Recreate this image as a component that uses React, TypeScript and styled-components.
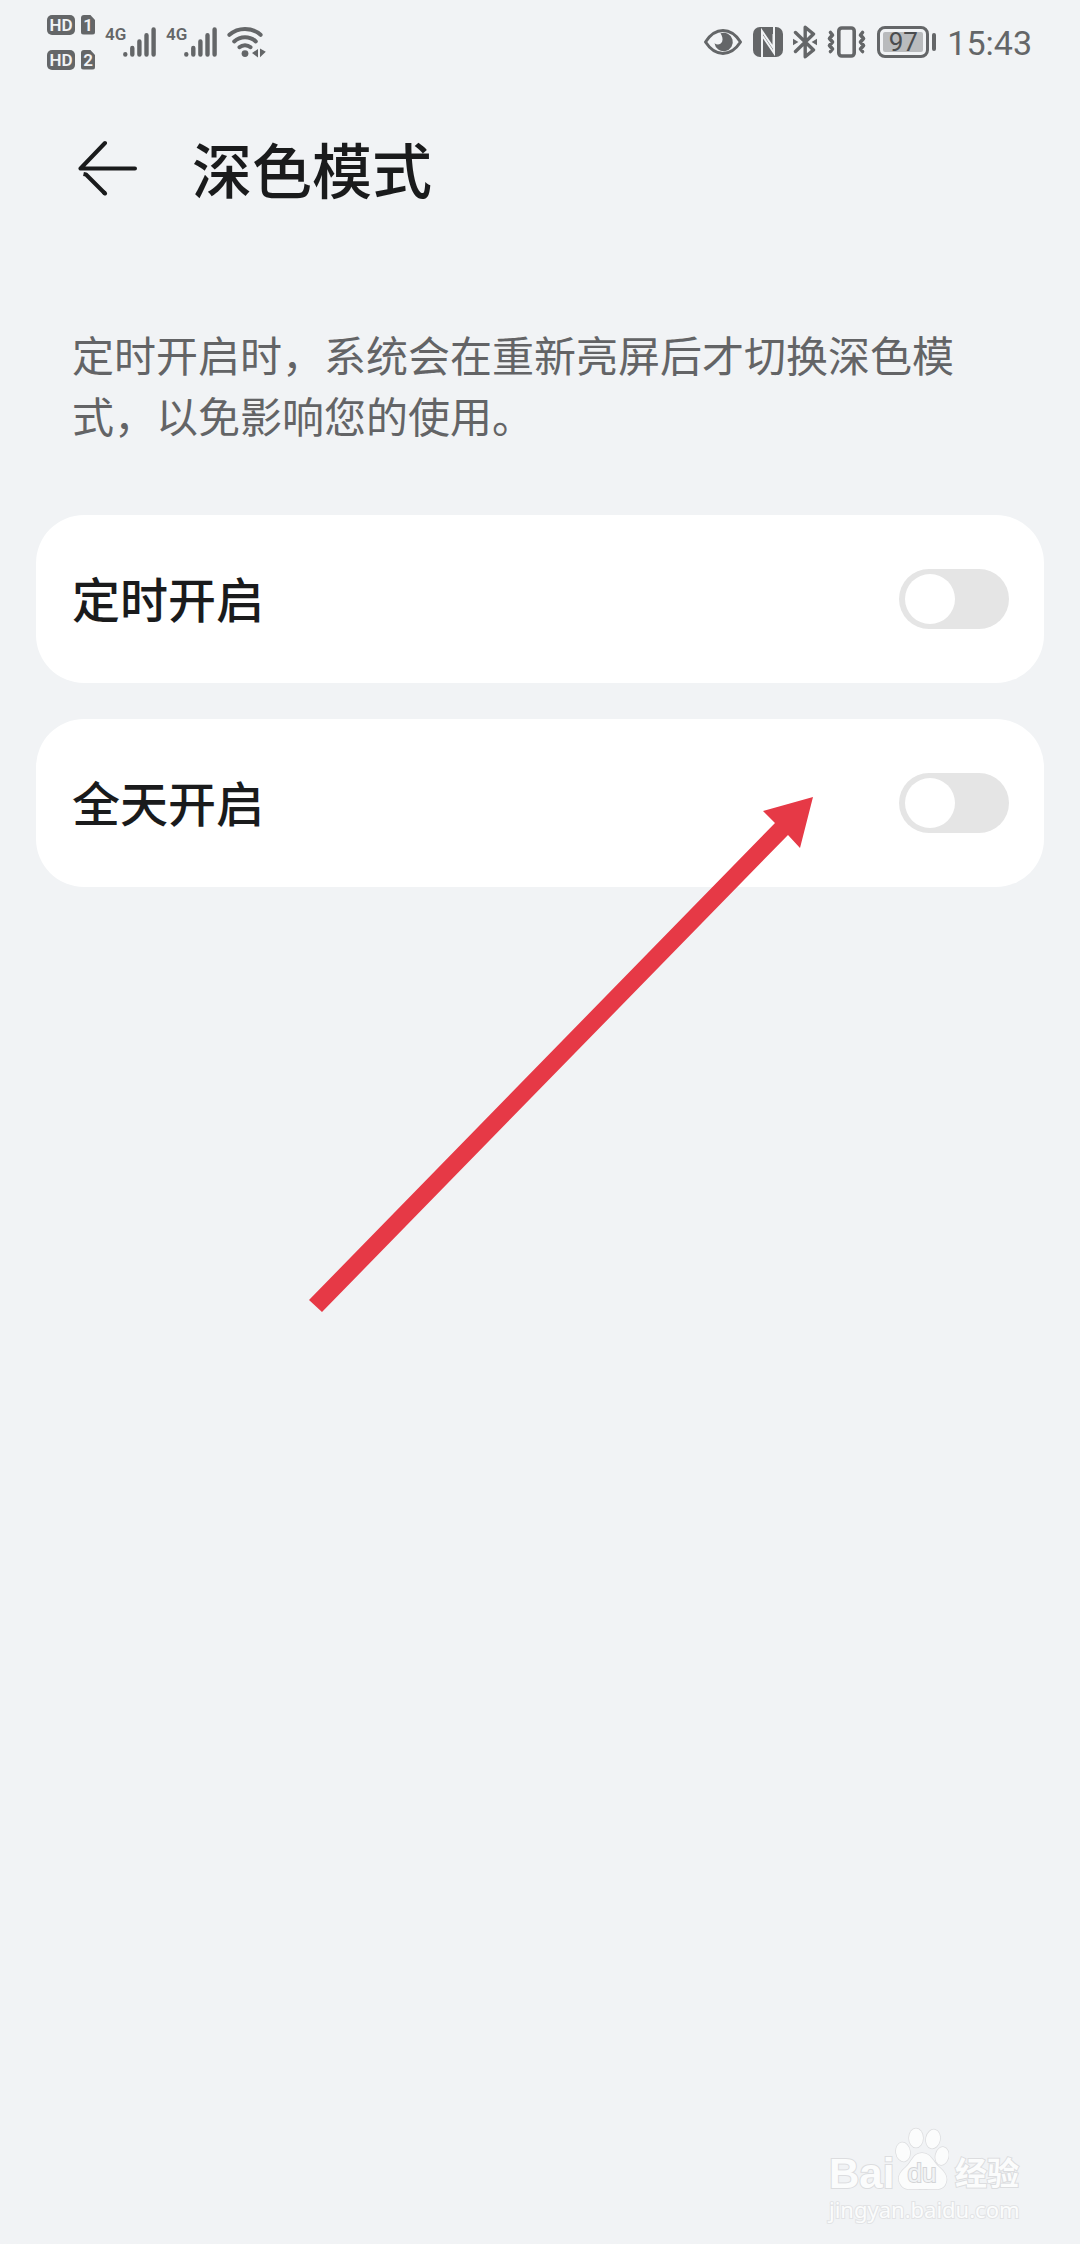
import React, { useState } from "react";
import styled, { createGlobalStyle } from "styled-components";

const INK = "#1a1b1c";
const STATUS = "#646668";
const PAGE = "#f1f3f5";

const GlobalStyle = createGlobalStyle`
  * { box-sizing: border-box; }
  body {
    margin: 0;
    background: ${PAGE};
    color: ${INK};
    font-family: "Noto Sans CJK SC", "Noto Sans", sans-serif;
  }
`;

const Page = styled.div`
  position: relative;
  min-height: 100vh;
  overflow: hidden;
  background: ${PAGE};
`;

const StatusBar = styled.div`
  display: flex;
  justify-content: space-between;
  align-items: center;
  height: 84px;
  padding: 0 48px 0 47px;
  color: ${STATUS};
  font-family: Roboto, sans-serif;
`;

const StatusGroup = styled.div`
  display: flex;
  align-items: center;
  gap: 10px;
  svg { display: block; }
`;

const SimColumn = styled.div`
  display: flex;
  flex-direction: column;
  gap: 15px;
`;

const SimRow = styled.div`
  display: flex;
  gap: 6px;
  color: ${PAGE};
  font-size: 17px;
  line-height: 20px;
  font-weight: 600;
  text-align: center;
`;

const HdBadge = styled.span`
  width: 28px;
  height: 20px;
  border-radius: 5px;
  background: ${STATUS};
`;

const SimBadge = styled.span`
  width: 14px;
  height: 20px;
  border-radius: 3px;
  background: ${STATUS};
  clip-path: polygon(0 0, 64% 0, 100% 28%, 100% 100%, 0 100%);
`;

const Cell = styled.div`
  display: flex;
  align-items: flex-start;
  width: 51px;
  height: 30px;
`;

const NetType = styled.span`
  width: 18px;
  font-size: 17px;
  line-height: 14px;
  font-weight: 600;
`;

const Battery = styled.div`
  display: flex;
  align-items: center;
  gap: 3px;
  width: 60px;
`;

const BatteryShell = styled.div`
  width: 52px;
  height: 32px;
  padding: 3px;
  border: 3px solid ${STATUS};
  border-radius: 8px;
`;

const BatteryFill = styled.div`
  height: 20px;
  border-radius: 2px;
  background: #b9bbbd;
  color: #4a4c4e;
  font-size: 26px;
  line-height: 20px;
  text-align: center;
`;

const BatteryNub = styled.div`
  width: 4px;
  height: 18px;
  border-radius: 2px;
  background: ${STATUS};
`;

const Clock = styled.time`
  padding-top: 2px;
  font-size: 34px;
  line-height: 40px;
`;

const Header = styled.header`
  display: flex;
  align-items: center;
  gap: 54px;
  height: 168px;
  padding: 0 78px;
`;

const BackButton = styled.button`
  display: block;
  width: 60px;
  height: 56px;
  padding: 0;
  border: 0;
  background: none;
  color: ${INK};
  cursor: pointer;
  svg { display: block; }
`;

const Title = styled.h1`
  margin: 0;
  font-size: 60px;
  line-height: 72px;
  font-weight: 500;
`;

const Main = styled.main`
  padding: 71px 36px;
`;

const Description = styled.p`
  margin: 0 0 70px;
  padding: 0 36px;
  color: #636466;
  font-size: 42px;
  line-height: 61px;
`;

const CardList = styled.div`
  display: flex;
  flex-direction: column;
  gap: 36px;
`;

const Card = styled.label`
  display: flex;
  align-items: center;
  justify-content: space-between;
  height: 168px;
  padding: 0 35px 0 36px;
  border-radius: 48px;
  background: #fff;
  cursor: pointer;
`;

const CardLabel = styled.span`
  padding-bottom: 4px;
  font-size: 48px;
  line-height: 64px;
  font-weight: 500;
`;

const Toggle = styled.input`
  appearance: none;
  display: flex;
  align-items: center;
  width: 110px;
  height: 60px;
  margin: 0;
  padding: 0 6px;
  border-radius: 30px;
  background: #e5e5e5;
  cursor: pointer;

  &::before {
    content: "";
    width: 50px;
    height: 50px;
    border-radius: 50%;
    background: #fff;
  }

  &:checked {
    justify-content: flex-end;
    background: #0a59f7;
  }
`;

const Pointer = styled.svg`
  position: absolute;
  left: 309px;
  top: 797px;
  pointer-events: none;
`;

const Watermark = styled.div`
  position: absolute;
  right: 60px;
  bottom: 22px;
  width: 191px;
  color: #fbfcfc;
  font-family: "Liberation Sans", "Noto Sans CJK SC", sans-serif;
  -webkit-text-stroke: 2px #dcdddf;
  paint-order: stroke fill;
`;

const Brand = styled.div`
  display: flex;
  align-items: flex-end;
  height: 76px;
`;

const BrandLatin = styled.span`
  width: 66px;
  font-size: 42px;
  line-height: 44px;
  font-weight: 700;
`;

const BrandHan = styled.span`
  margin-left: 6px;
  font-size: 32px;
  line-height: 44px;
  font-weight: 700;
  white-space: nowrap;
`;

const Paw = styled.div`
  position: relative;
  width: 54px;
  height: 76px;
  svg { display: block; }
`;

const PawText = styled.span`
  position: absolute;
  left: 0;
  right: 0;
  bottom: 8px;
  color: ${PAGE};
  font-size: 26px;
  line-height: 30px;
  text-align: center;
  -webkit-text-stroke: 2px #d3d4d6;
`;

const Site = styled.div`
  font-family: "Noto Sans", sans-serif;
  font-size: 22px;
  line-height: 26px;
  -webkit-text-stroke: 2px #e2e3e5;
`;

function Signal() {
  return (
    <Cell>
      <NetType>4G</NetType>
      <svg width="33" height="30" viewBox="0 0 33 30" stroke={STATUS} strokeWidth="4.4" strokeLinecap="round" aria-hidden="true">
        <path d="M2.3 27.2v.4M9.3 21v6.6M16.4 14.5v13.1M23.5 8.2v19.4M30.6 2.4v25.2" />
      </svg>
    </Cell>
  );
}

function Wifi() {
  return (
    <svg width="40" height="32" viewBox="0 0 40 32" fill="none" stroke={STATUS} strokeWidth="4" strokeLinecap="round" aria-hidden="true">
      <path d="M2.4 8.8a23.5 23.5 0 0 1 31.2 0" />
      <path d="M7.2 15.4a16 16 0 0 1 21.6 0" />
      <path d="M12.4 21.2a8.6 8.6 0 0 1 11.2 0" />
      <circle cx="18" cy="27.6" r="3.4" fill={STATUS} stroke="none" />
      <path d="M31 23v8.4L25 27zM33 22.6v8.6l5.8-5.4z" fill={STATUS} stroke="none" />
    </svg>
  );
}

function Eye() {
  return (
    <svg width="40" height="30" viewBox="0 0 40 30" aria-hidden="true">
      <path d="M2.5 15C8 6.5 13.5 3.6 20 3.6S32 6.5 37.5 15C32 23.5 26.5 26.4 20 26.4S8 23.5 2.5 15z" fill="none" stroke={STATUS} strokeWidth="3" strokeLinejoin="round" />
      <path d="M17.5 6.3a9.2 9.2 0 1 1-6 9.9c2.6 2 6.4 1.4 7.6-1.4 1.2-2.9 0-5.900-1.600-8.500z" fill={STATUS} />
    </svg>
  );
}

function Nfc() {
  return (
    <svg width="30" height="30" viewBox="0 0 30 30" aria-hidden="true">
      <rect width="30" height="30" rx="7" fill={STATUS} />
      <path d="M9 30V4L20.5 21V7M21 0v26L9.5 9" fill="none" stroke={PAGE} strokeWidth="2" />
    </svg>
  );
}

function Bluetooth() {
  return (
    <svg width="24" height="34" viewBox="0 0 24 34" aria-hidden="true">
      <path d="M2.5 7.5l18 17.5-8.3 6.8V2.2l8.3 6.8-18 17.5" fill="none" stroke={STATUS} strokeWidth="3.4" strokeLinejoin="round" strokeLinecap="round" />
      <path d="M0 13.8l5.4 3.2L0 20.2zM24 13.8L18.6 17l5.4 3.2z" fill={STATUS} />
    </svg>
  );
}

function Vibrate() {
  return (
    <svg width="40" height="32" viewBox="0 0 40 32" fill="none" stroke={STATUS} strokeWidth="3.6" strokeLinejoin="round" strokeLinecap="round" aria-hidden="true">
      <rect x="11.8" y="2" width="15.4" height="28" rx="3" />
      <path d="M3.5 6.5l2 2.5-3 3.5 3 3.5-3 3.5 3 3.5-2 2.5M35.5 6.5l-2 2.5 3 3.5-3 3.5 3 3.5-3 3.5 2 2.5" />
    </svg>
  );
}

function Option({ label }: { label: string }) {
  const [on, setOn] = useState(false);
  return (
    <Card>
      <CardLabel>{label}</CardLabel>
      <Toggle type="checkbox" role="switch" checked={on} onChange={(e) => setOn(e.target.checked)} />
    </Card>
  );
}

export default function App() {
  return (
    <Page>
      <GlobalStyle />
      <StatusBar>
        <StatusGroup>
          <SimColumn>
            <SimRow><HdBadge>HD</HdBadge><SimBadge>1</SimBadge></SimRow>
            <SimRow><HdBadge>HD</HdBadge><SimBadge>2</SimBadge></SimRow>
          </SimColumn>
          <Signal />
          <Signal />
          <Wifi />
        </StatusGroup>
        <StatusGroup>
          <Eye />
          <Nfc />
          <Bluetooth />
          <Vibrate />
          <Battery>
            <BatteryShell><BatteryFill>97</BatteryFill></BatteryShell>
            <BatteryNub />
          </Battery>
          <Clock>15:43</Clock>
        </StatusGroup>
      </StatusBar>
      <Header>
        <BackButton type="button" aria-label="返回">
          <svg width="60" height="56" viewBox="0 0 60 56" fill="none" stroke="currentColor" strokeWidth="4" strokeLinecap="round" strokeLinejoin="round" aria-hidden="true">
            <path d="M27 3L2.5 28.5H57" />
            <path d="M5.5 34L8 34.5 27 53.5" strokeLinecap="butt" />
            <path d="M26 52.5l1 1" />
          </svg>
        </BackButton>
        <Title>深色模式</Title>
      </Header>
      <Main>
        <Description>定时开启时，系统会在重新亮屏后才切换深色模式，以免影响您的使用。</Description>
        <CardList>
          <Option label="定时开启" />
          <Option label="全天开启" />
        </CardList>
      </Main>
      <Pointer width="504" height="516" viewBox="0 0 504 516" aria-hidden="true">
        <path d="M504 0L491 51 479 38 13 515 0 503 466 26 454 14z" fill="#e63946" />
      </Pointer>
      <Watermark>
        <Brand>
          <BrandLatin>Bai</BrandLatin>
          <Paw>
            <svg width="54" height="76" viewBox="0 0 54 76" fill="#fbfcfc" stroke="#dcdddf" strokeWidth="1.5" aria-hidden="true">
              <ellipse cx="8" cy="32" rx="7" ry="9.5" transform="rotate(-8 8 32)" />
              <ellipse cx="21" cy="18" rx="7" ry="9.5" />
              <ellipse cx="38" cy="19" rx="7" ry="9.5" transform="rotate(12 38 19)" />
              <ellipse cx="47" cy="36" rx="6.5" ry="9" transform="rotate(12 47 36)" />
              <path d="M27 33C36 33 38 42 44 47C50 52 54 58 50 65C46 71 38 69 28 69S10 71 6 65C1 58 5 52 11 47C17 42 18 33 27 33z" />
            </svg>
            <PawText>du</PawText>
          </Paw>
          <BrandHan lang="zh">经验</BrandHan>
        </Brand>
        <Site>jingyan.baidu.com</Site>
      </Watermark>
    </Page>
  );
}
